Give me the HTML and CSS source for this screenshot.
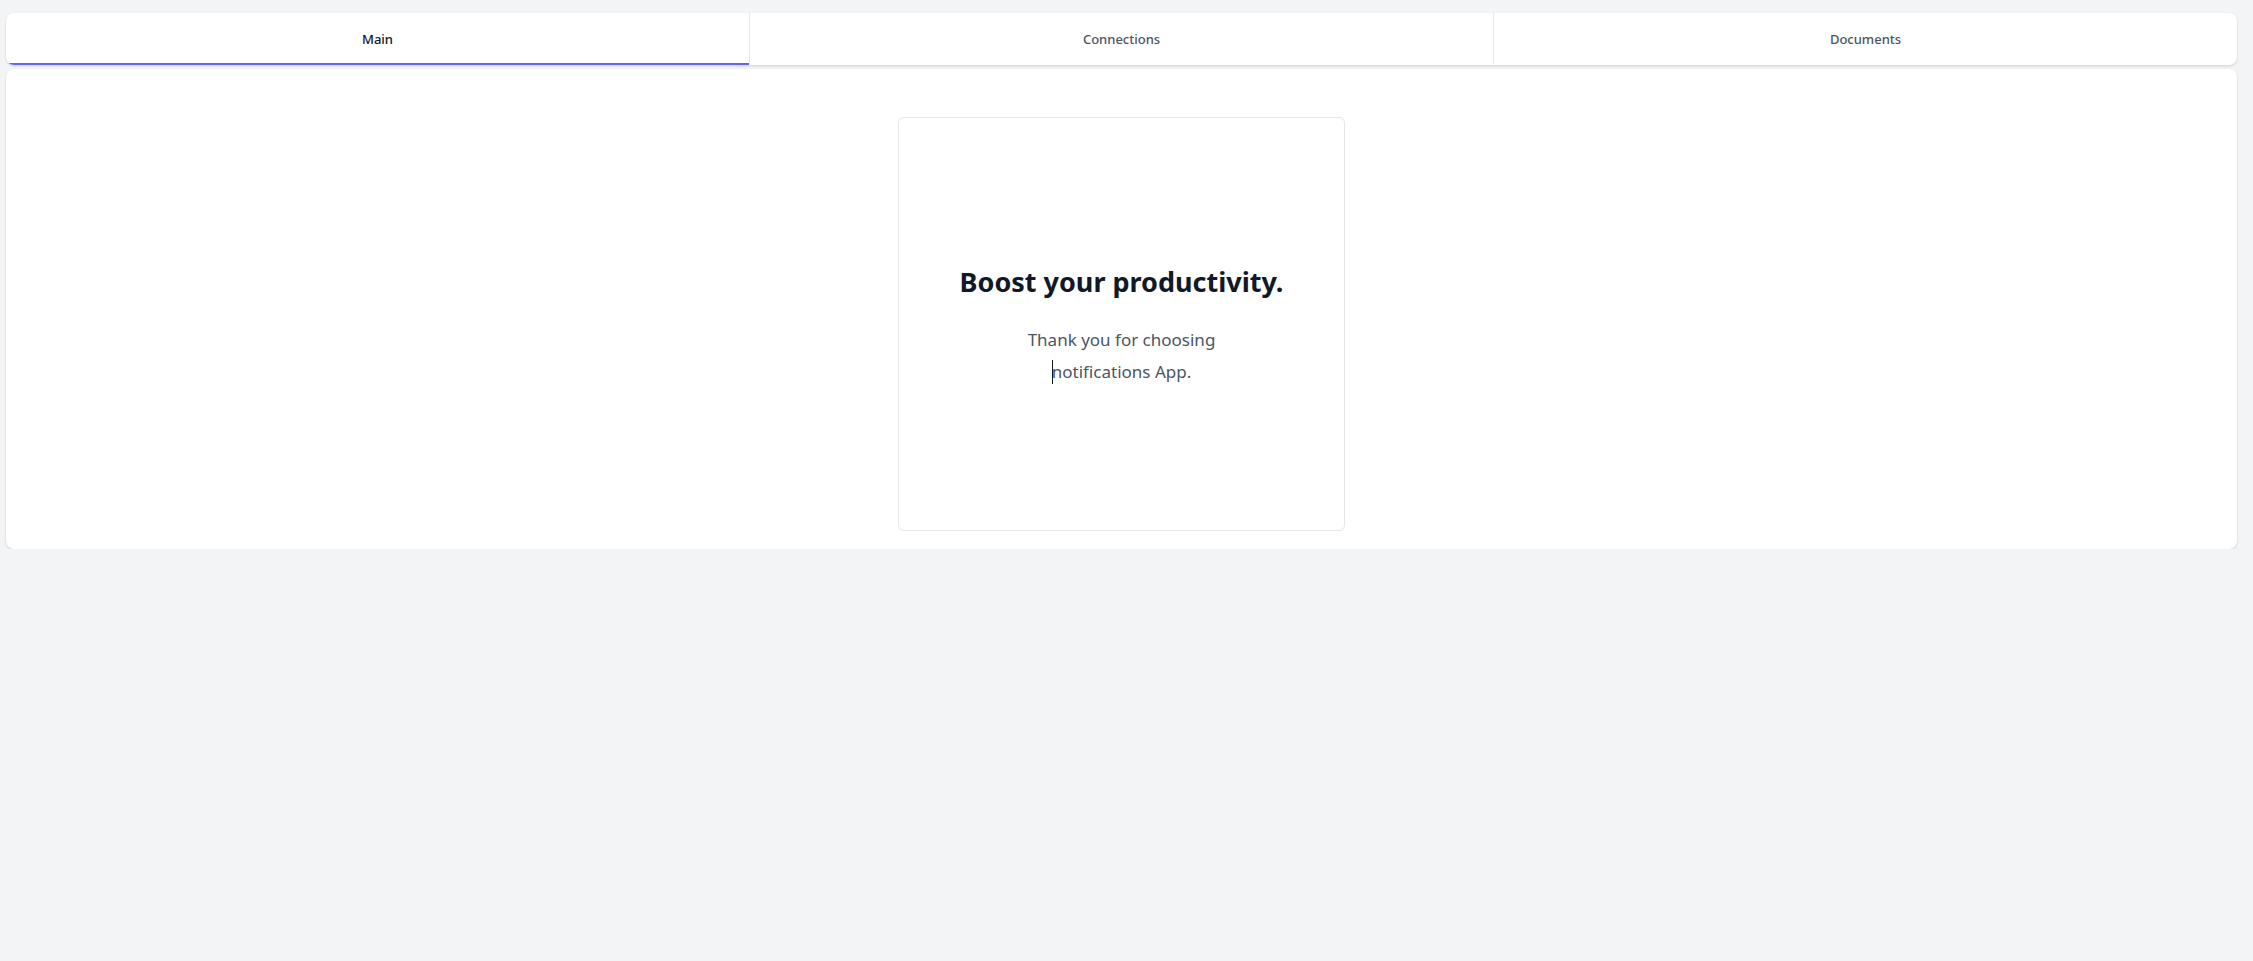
FILE: index.html
```html
<!DOCTYPE html>
<html lang="en">
<head>
    <meta charset="UTF-8">
    <meta name="viewport" content="width=device-width, initial-scale=1.0">
    <title>Notifications App</title>
    <link rel="stylesheet" href="styles.css">
</head>
<body>
    <div class="page">
        <nav class="tabs">
            <a class="tab active" href="#">Main</a>
            <a class="tab" href="#">Connections</a>
            <a class="tab" href="#">Documents</a>
        </nav>

        <main class="panel">
            <div class="welcome-card">
                <h1>Boost your productivity.</h1>
                <p class="welcome-text">Thank you for choosing <span class="word"><span class="caret"></span>notifications</span> App.</p>
            </div>
        </main>
    </div>
</body>
</html>
```

FILE: styles.css
```css
:root {
    --page-bg: #f3f4f6;
    --card-bg: #ffffff;
    --border: #e5e7eb;
    --accent: #6366f1;
    --heading: #111827;
    --muted: #4b5563;
}

* {
    box-sizing: border-box;
    margin: 0;
    padding: 0;
}

body {
    font-family: 'Noto Sans', 'Open Sans', sans-serif;
    background-color: var(--page-bg);
    color: var(--heading);
}

.page {
    padding: 13px 16px 0 6px;
    display: flex;
    flex-direction: column;
    gap: 4px;
}

.tabs {
    display: flex;
    height: 52px;
    background-color: var(--card-bg);
    border-radius: 8px;
    overflow: hidden;
    box-shadow: 0 1px 3px rgba(0, 0, 0, 0.1), 0 1px 2px rgba(0, 0, 0, 0.06);
}

.tab {
    flex: 1;
    display: flex;
    align-items: center;
    justify-content: center;
    padding-top: 2px;
    font-size: 13px;
    font-weight: 500;
    color: var(--muted);
    text-decoration: none;
    border-left: 1px solid var(--border);
    border-bottom: 2px solid transparent;
}

.tab:first-child {
    border-left: none;
}

.tab.active {
    color: var(--heading);
    border-bottom-color: var(--accent);
}

.panel {
    background-color: var(--card-bg);
    border-radius: 8px;
    box-shadow: 0 1px 3px rgba(0, 0, 0, 0.1), 0 1px 2px rgba(0, 0, 0, 0.06);
    padding: 48px 16px 18px;
    display: flex;
    justify-content: center;
}

.welcome-card {
    width: 447px;
    height: 414px;
    padding-top: 3px;
    border: 1px solid var(--border);
    border-radius: 6px;
    display: flex;
    flex-direction: column;
    align-items: center;
    justify-content: center;
    text-align: center;
}

.welcome-card h1 {
    font-size: 27px;
    font-weight: 700;
    color: var(--heading);
    line-height: 36px;
}

.welcome-text {
    margin-top: 24px;
    max-width: 200px;
    font-size: 17px;
    line-height: 32px;
    color: var(--muted);
}

.word {
    white-space: nowrap;
}

.caret {
    display: inline-block;
    width: 1px;
    height: 24px;
    margin-right: -1px;
    vertical-align: -6px;
    background-color: var(--heading);
}
```
